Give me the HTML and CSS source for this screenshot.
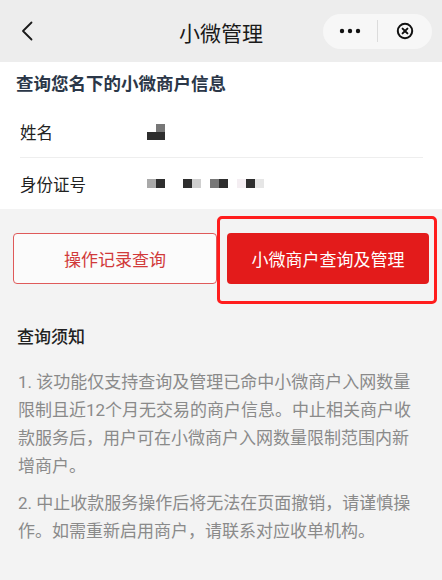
FILE: index.html
```html
<!DOCTYPE html>
<html lang="zh-CN">
<head>
    <meta charset="UTF-8">
    <meta name="viewport" content="width=device-width, initial-scale=1.0">
    <title>小微管理</title>
    <link rel="stylesheet" href="styles.css">
</head>
<body>

    <div class="navbar">
        <div class="nav-left">
            <svg class="back-icon" width="12" height="20" viewBox="0 0 12 20">
                <path d="M10.5 1.5 L2 10 L10.5 18.5" fill="none" stroke="#1a1a1a" stroke-width="1.8" stroke-linecap="round" stroke-linejoin="round"/>
            </svg>
        </div>
        <div class="nav-title">小微管理</div>
        <div class="nav-right">
            <div class="capsule">
                <span class="capsule-btn">
                    <svg width="22" height="6" viewBox="0 0 22 6">
                        <circle cx="3" cy="3" r="2.2" fill="#111"/>
                        <circle cx="11" cy="3" r="2.2" fill="#111"/>
                        <circle cx="19" cy="3" r="2.2" fill="#111"/>
                    </svg>
                </span>
                <span class="capsule-line"></span>
                <span class="capsule-btn">
                    <svg width="18" height="18" viewBox="0 0 18 18">
                        <circle cx="9" cy="9" r="7.2" fill="none" stroke="#111" stroke-width="2"/>
                        <path d="M6.6 6.6 L11.4 11.4 M11.4 6.6 L6.6 11.4" stroke="#111" stroke-width="2" stroke-linecap="round"/>
                    </svg>
                </span>
            </div>
        </div>
    </div>

    <div class="info-card">
        <h3 class="card-title">查询您名下的小微商户信息</h3>
        <div class="info-row">
            <span class="row-label">姓名</span>
            <span class="mosaic">
                <span class="tile tile-blank"></span><span class="tile tile-mid"></span><br>
                <span class="tile tile-dark"></span><span class="tile tile-dark"></span>
            </span>
        </div>
        <div class="info-row">
            <span class="row-label">身份证号</span>
            <span class="mosaic mosaic-id">
                <span class="tile tile-light"></span><span class="tile tile-dark"></span>
                <span class="tile-gap"></span>
                <span class="tile tile-dark"></span><span class="tile tile-pale"></span>
                <span class="tile-gap small"></span>
                <span class="tile tile-mid"></span><span class="tile tile-dark"></span>
                <span class="tile-gap small"></span>
                <span class="tile tile-faint"></span><span class="tile tile-dark"></span><span class="tile tile-pale2"></span>
            </span>
        </div>
    </div>

    <div class="btn-row">
        <button class="btn btn-outline">操作记录查询</button>
        <div class="btn-mark">
            <button class="btn btn-primary">小微商户查询及管理</button>
        </div>
    </div>

    <div class="notice">
        <h4 class="notice-title">查询须知</h4>
        <p>1. 该功能仅支持查询及管理已命中小微商户入网数量限制且近12个月无交易的商户信息。中止相关商户收款服务后，用户可在小微商户入网数量限制范围内新增商户。</p>
        <p>2. 中止收款服务操作后将无法在页面撤销，请谨慎操作。如需重新启用商户，请联系对应收单机构。</p>
    </div>

</body>
</html>
```

FILE: styles.css
```css
body {
    margin: 0;
    background-color: #f3f3f3;
    font-family: Roboto, "Noto Sans CJK SC", sans-serif;
    color: #1a1a1a;
}

/* top bar */
.navbar {
    height: 62px;
    background-color: #ededed;
    display: grid;
    grid-template-columns: 1fr auto 1fr;
    align-items: center;
}

.nav-left {
    padding-left: 21px;
    display: flex;
    align-items: center;
}

.nav-title {
    font-size: 21px;
    color: #1a1a1a;
    padding-top: 1px;
}

.nav-right {
    display: flex;
    justify-content: flex-end;
    padding-right: 10px;
}

.capsule {
    width: 109px;
    height: 35px;
    border-radius: 18px;
    background-color: #f7f7f7;
    display: flex;
    align-items: center;
}

.capsule-btn {
    width: 54px;
    display: flex;
    justify-content: center;
    align-items: center;
}

.capsule-line {
    width: 1px;
    height: 22px;
    background-color: #dcdcdc;
}

/* info card */
.info-card {
    background-color: #fff;
}

.card-title {
    margin: 0;
    padding: 10px 16px;
    line-height: 25px;
    font-size: 17.5px;
    font-weight: 700;
    color: #2b3748;
}

.info-row {
    margin: 0 19px 0 20px;
    height: 50px;
    display: flex;
    align-items: center;
    font-size: 16.5px;
    color: #222;
}

.info-row + .info-row {
    border-top: 1px solid #eeeeee;
    height: 51px;
}

.row-label {
    width: 127px;
}

.mosaic {
    display: inline-block;
    line-height: 0;
}

.mosaic-id {
    display: flex;
}

.tile {
    display: inline-block;
    width: 9px;
    height: 8px;
}

.tile-gap {
    display: inline-block;
    width: 18px;
}

.tile-gap.small {
    width: 9px;
}

.tile-blank { background-color: transparent; }
.tile-dark { background-color: #2e2e2e; }
.tile-mid { background-color: #777; }
.tile-light { background-color: #a9a9a9; }
.tile-pale { background-color: #cfcfcf; }
.tile-pale2 { background-color: #e6e6e6; }
.tile-faint { background-color: #f4eef2; }

.mosaic-id .tile {
    height: 9px;
}

/* buttons */
.btn-row {
    display: flex;
    gap: 10px;
    padding: 24px 13px 0;
}

.btn {
    height: 51px;
    border-radius: 4px;
    font-family: inherit;
    font-size: 17px;
    cursor: pointer;
}

.btn-outline {
    width: 204px;
    background-color: #fbfbfb;
    border: 1px solid #df5a5a;
    color: #d13a3a;
}

.btn-mark {
    position: relative;
    flex: 1;
    display: flex;
}

.btn-mark::after {
    content: "";
    position: absolute;
    top: -17px;
    bottom: -20px;
    left: -10px;
    right: -8px;
    border: 3px solid #ff1d1d;
    border-radius: 5px;
    pointer-events: none;
}

.btn-primary {
    flex: 1;
    background-color: #e31b1b;
    border: none;
    color: #fff;
}

/* notice */
.notice {
    padding: 0 26px 0 18px;
}

.notice-title {
    margin: 41px 0 0 -1px;
    line-height: 24px;
    font-size: 17px;
    font-weight: 500;
    color: #222;
}

.notice p {
    margin: 19px 0 0;
    line-height: 28px;
    font-size: 17px;
    color: #8a8a8a;
}

.notice p + p {
    margin-top: 9px;
}
```
